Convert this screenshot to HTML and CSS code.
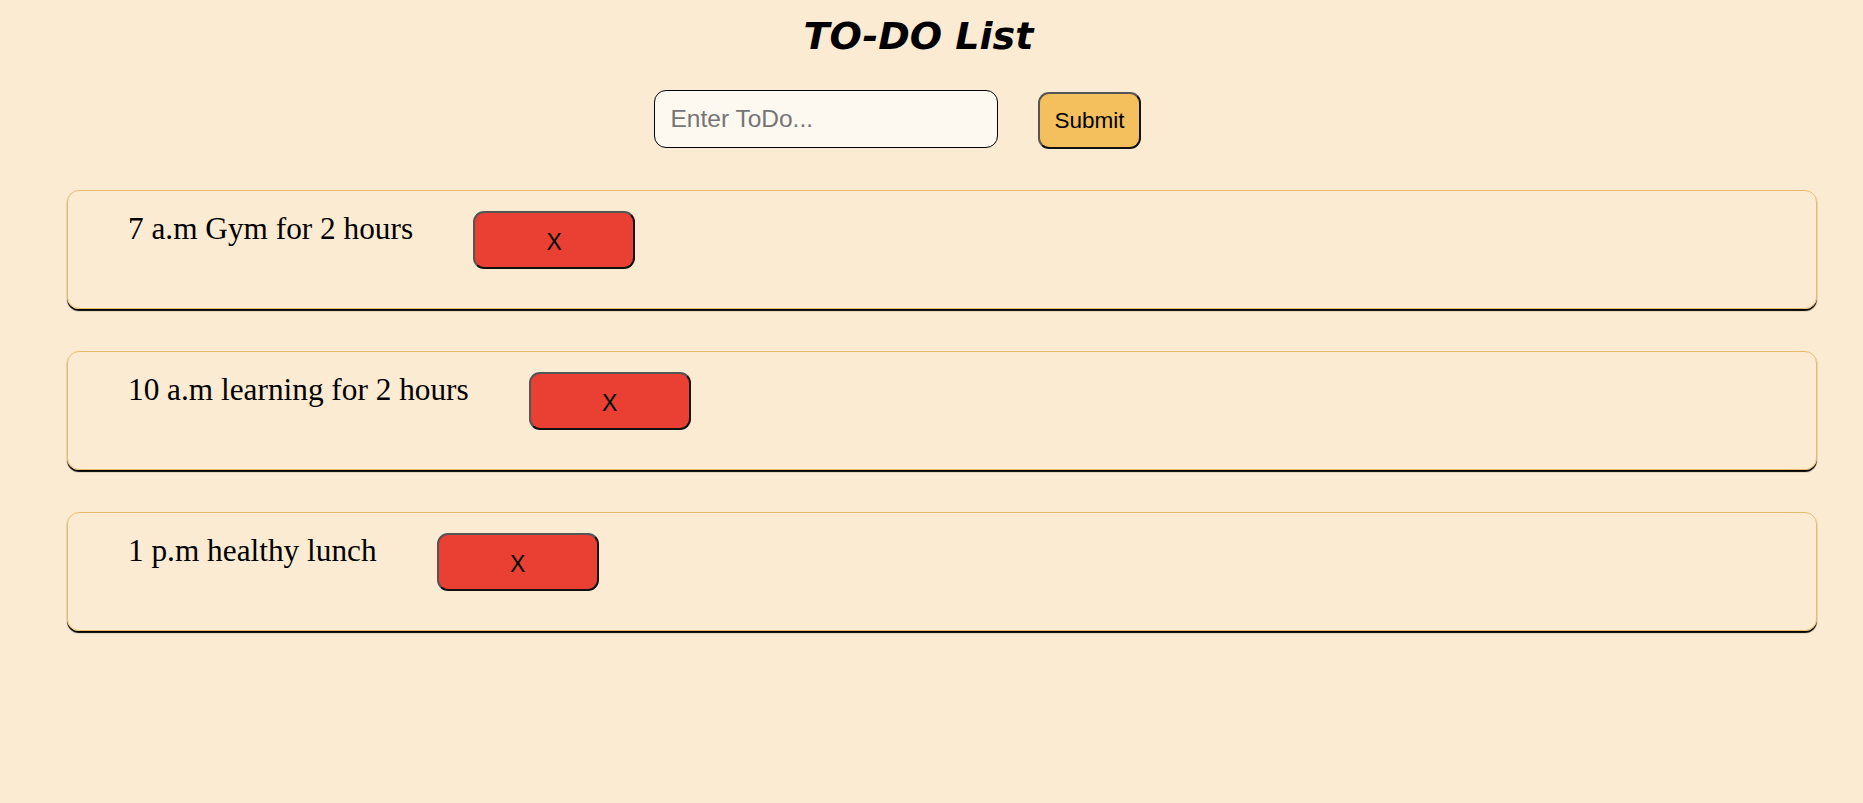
FILE: index.html
```html
<!DOCTYPE html>
<html lang="en">
<head>
<meta charset="utf-8">
<title>TO-DO List</title>
<link rel="stylesheet" href="styles.css">
</head>
<body>
  <h1 class="title">TO-DO List</h1>
  <form class="todo-form">
    <input class="todo-input" type="text" placeholder="Enter ToDo...">
    <button class="submit-btn" type="button">Submit</button>
  </form>
  <ul class="todo-list">
    <li class="todo-item">
      <span class="todo-text">7 a.m Gym for 2 hours</span>
      <button class="delete-btn" type="button">X</button>
    </li>
    <li class="todo-item">
      <span class="todo-text">10 a.m learning for 2 hours</span>
      <button class="delete-btn" type="button">X</button>
    </li>
    <li class="todo-item">
      <span class="todo-text">1 p.m healthy lunch</span>
      <button class="delete-btn" type="button">X</button>
    </li>
  </ul>
</body>
</html>
```
FILE: styles.css
```css
html, body {
  margin: 0;
  padding: 0;
}

body {
  background: #fcebd3;
  font-family: "Liberation Serif", "Times New Roman", serif;
  color: #000;
  min-height: 803px;
}

.title {
  margin: 14px 0 0;
  padding-right: 26px;
  text-align: center;
  font-family: "Comic Sans MS", "DejaVu Sans", sans-serif;
  font-weight: bold;
  font-style: italic;
  font-size: 38px;
  line-height: normal;
}

.todo-form {
  display: flex;
  justify-content: center;
  align-items: center;
  gap: 40px;
  margin: 31px 0 0;
  padding-right: 68px;
}

.todo-input {
  box-sizing: border-box;
  width: 344px;
  height: 58px;
  margin: 0;
  padding: 0 15px;
  border: 1px solid #000;
  border-radius: 12px;
  background: #fdf8f0;
  font-family: "Liberation Sans", Arial, sans-serif;
  font-size: 24.5px;
  color: #000;
  outline: none;
}

.todo-input::placeholder {
  color: #757575;
}

.submit-btn {
  box-sizing: border-box;
  height: 57px;
  margin: 3px 0 0;
  padding: 0 14px;
  border: 2px solid;
  border-color: #555 #111 #111 #555;
  border-radius: 11px;
  background: #f4c05d;
  font-family: "Liberation Sans", Arial, sans-serif;
  font-size: 22.5px;
  color: #000;
}

.todo-list {
  list-style: none;
  margin: 41px 0 0 67px;
  padding: 0;
  width: 1750px;
}

.todo-item {
  box-sizing: border-box;
  display: flex;
  align-items: flex-start;
  gap: 60px;
  height: 119px;
  margin-bottom: 42px;
  padding: 20px 60px 0;
  border: 1px solid #e8bb6c;
  border-radius: 12px;
  box-shadow: 0 2px 1px #000;
}

.todo-text {
  font-size: 31.3px;
  line-height: normal;
}

.delete-btn {
  box-sizing: border-box;
  width: 162px;
  height: 58px;
  margin: 0;
  padding: 5px 0 0;
  border: 2px solid;
  border-color: #555 #111 #111 #555;
  border-radius: 11px;
  background: #e94033;
  font-family: "Liberation Sans", Arial, sans-serif;
  font-size: 23px;
  color: #000;
}
```
